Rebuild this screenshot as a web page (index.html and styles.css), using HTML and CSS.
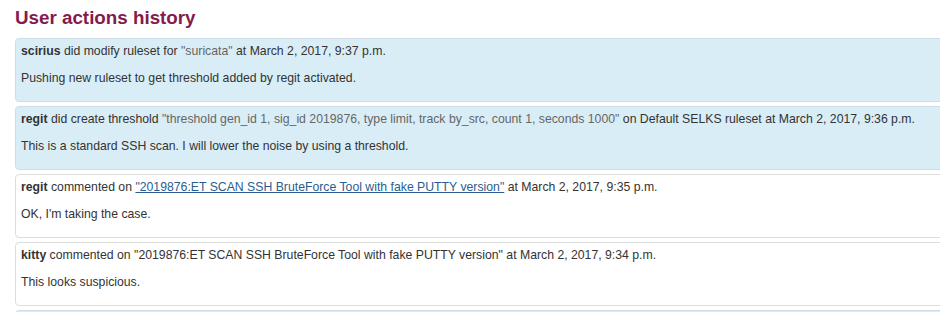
FILE: index.html
```html
<!DOCTYPE html>
<html>
<head>
<meta charset="utf-8">
<link rel="stylesheet" href="styles.css">
</head>
<body>
<div class="page">
  <h2 class="title">User actions history</h2>
  <div class="panel info">
    <div class="line"><b>scirius</b> did modify ruleset for <span class="q">"suricata"</span> at March 2, 2017, 9:37 p.m.</div>
    <p class="comment">Pushing new ruleset to get threshold added by regit activated.</p>
  </div>
  <div class="panel info">
    <div class="line"><b>regit</b> did create threshold <span class="q">"threshold gen_id 1, sig_id 2019876, type limit, track by_src, count 1, seconds 1000"</span> on Default SELKS ruleset at March 2, 2017, 9:36 p.m.</div>
    <p class="comment">This is a standard SSH scan. I will lower the noise by using a threshold.</p>
  </div>
  <div class="panel">
    <div class="line"><b>regit</b> commented on <a class="link" href="#">"2019876:ET SCAN SSH BruteForce Tool with fake PUTTY version"</a> at March 2, 2017, 9:35 p.m.</div>
    <p class="comment">OK, I'm taking the case.</p>
  </div>
  <div class="panel">
    <div class="line"><b>kitty</b> commented on "2019876:ET SCAN SSH BruteForce Tool with fake PUTTY version" at March 2, 2017, 9:34 p.m.</div>
    <p class="comment">This looks suspicious.</p>
  </div>
  <div class="panel info">
    <div class="line">&nbsp;</div>
    <p class="comment">&nbsp;</p>
  </div>
</div>
</body>
</html>
```
FILE: styles.css
```css
html, body {
  margin: 0;
  padding: 0;
  background: #fff;
  overflow: hidden;
}
.page {
  padding-left: 15px;
  width: 935px;
  font-family: "Liberation Sans", Arial, sans-serif;
  font-size: 12.25px;
  color: #333;
}
.title {
  margin: 7px 0 9px;
  font-size: 18.8px;
  line-height: 22px;
  font-weight: bold;
  color: #841b4e;
}
.panel {
  width: 940px;
  box-sizing: border-box;
  border: 1px solid #ddd;
  border-radius: 4px;
  background: #fff;
  padding: 4px 5px;
  margin-bottom: 4px;
  line-height: 17px;
}
.panel.info {
  background: #d9edf7;
  border-color: #cfdde6;
}
.line b {
  font-weight: bold;
}
.q {
  color: #666;
}
.link {
  color: #2a5d8f;
  text-decoration: underline;
}
.comment {
  margin: 10px 0 10px;
}
```
